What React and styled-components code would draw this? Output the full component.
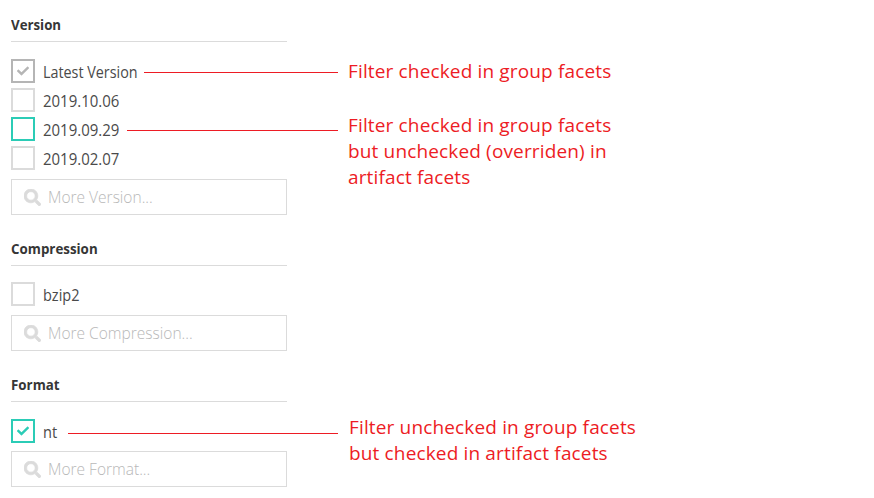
import React from "react";
import styled, { createGlobalStyle } from "styled-components";
import { FaCheck, FaSearch } from "react-icons/fa";

const facets = [
    {
        name: "Version",
        titleStretch: 0.885,
        gap: 17,
        searchGap: 9,
        filters: [
            { label: "Latest Version", stretch: 0.896, checked: true, state: "group", leaderAt: 133 },
            { label: "2019.10.06", stretch: 0.935 },
            { label: "2019.09.29", stretch: 0.935, state: "override", leaderAt: 116 },
            { label: "2019.02.07", stretch: 0.935 },
        ],
    },
    {
        name: "Compression",
        titleStretch: 0.89,
        gap: 16,
        searchGap: 9,
        filters: [{ label: "bzip2", stretch: 0.905 }],
    },
    {
        name: "Format",
        titleStretch: 0.89,
        gap: 17,
        searchGap: 8,
        filters: [{ label: "nt", stretch: 0.91, checked: true, state: "override", leaderAt: 57, leaderTop: 14 }],
    },
];

const notes = [
    { lines: ["Filter checked in group facets"], gap: 58 },
    { lines: ["Filter checked in group facets", "but unchecked (overriden) in", "artifact facets"], gap: 28 },
    { lines: ["Filter unchecked in group facets", "but checked in artifact facets"], gap: 224, indent: 1 },
];

const boxColors = {
    group: "#b5b5b5",
    override: "#2bccb6",
};

const GlobalStyle = createGlobalStyle`
    * {
        box-sizing: border-box;
    }
    body {
        margin: 0;
        background: #fff;
        font-family: "Open Sans", "Noto Sans", sans-serif;
    }
`;

const Page = styled.div`
    display: flex;
    width: 874px;
    height: 498px;
    padding-left: 11px;
    overflow: hidden;
`;

const FacetList = styled.div`
    width: 327px;
    padding-top: 8px;
`;

const Facet = styled.section`
    margin-bottom: 17px;
`;

const FacetTitle = styled.h2`
    width: 276px;
    height: 34px;
    margin: 0;
    border-bottom: 1px solid #dbdbdb;
    color: #363636;
    font-size: 15px;
    font-weight: 700;
    line-height: 33px;
`;

const Stretch = styled.span`
    display: inline-block;
    white-space: nowrap;
    transform: scaleX(${({ $x }) => $x});
    transform-origin: left center;
`;

const Filters = styled.div`
    display: flex;
    flex-direction: column;
    gap: 5px;
    margin-top: ${({ $gap }) => $gap}px;
`;

const FilterRow = styled.div`
    display: flex;
    height: 24px;
`;

const CheckBox = styled.span`
    display: flex;
    flex: none;
    align-items: center;
    justify-content: center;
    width: 24px;
    height: 24px;
    border: 2px solid ${({ $state }) => boxColors[$state] || "#dbdbdb"};
    color: ${({ $state }) => boxColors[$state]};
    font-size: 12px;
`;

const Label = styled.span`
    flex: none;
    width: ${({ $width }) => $width}px;
    padding-left: 8px;
    color: #4a4a4a;
    font-size: 16px;
    line-height: 26px;
`;

const Leader = styled.span`
    flex: 1;
    height: 1px;
    margin-top: ${({ $top }) => $top || 13}px;
    background: #ed1c24;
`;

const SearchBox = styled.div`
    display: flex;
    align-items: center;
    gap: 7px;
    width: 276px;
    height: 36px;
    margin-top: ${({ $gap }) => $gap}px;
    padding-left: 12px;
    border: 1px solid #dbdbdb;
    color: #dbdbdb;
    font-size: 17px;
    svg {
        stroke: currentColor;
        stroke-width: 22px;
    }
`;

const Placeholder = styled(Stretch)`
    color: #b8b8b8;
    font-size: 16px;
    font-weight: 300;
`;

const Notes = styled.div`
    width: 400px;
    padding-left: 10px;
`;

const Note = styled.p`
    margin: 0;
    padding-top: ${({ $gap }) => $gap}px;
    padding-left: ${({ $indent }) => $indent || 0}px;
    color: #ed1c24;
    font-size: 19px;
    letter-spacing: 0.15px;
    line-height: 26px;
    white-space: nowrap;
    span {
        display: block;
    }
`;

function Filter({ filter }) {
    return (
        <FilterRow>
            <CheckBox $state={filter.state}>{filter.checked && <FaCheck />}</CheckBox>
            <Label $width={filter.leaderAt ? filter.leaderAt - 24 : 200}>
                <Stretch $x={filter.stretch}>{filter.label}</Stretch>
            </Label>
            {filter.leaderAt && <Leader $top={filter.leaderTop} />}
        </FilterRow>
    );
}

export default function App() {
    return (
        <>
            <GlobalStyle />
            <Page>
                <FacetList>
                    {facets.map((facet) => (
                        <Facet key={facet.name}>
                            <FacetTitle>
                                <Stretch $x={facet.titleStretch}>{facet.name}</Stretch>
                            </FacetTitle>
                            <Filters $gap={facet.gap}>
                                {facet.filters.map((filter) => (
                                    <Filter key={filter.label} filter={filter} />
                                ))}
                            </Filters>
                            <SearchBox $gap={facet.searchGap}>
                                <FaSearch />
                                <Placeholder $x={0.97}>More {facet.name}...</Placeholder>
                            </SearchBox>
                        </Facet>
                    ))}
                </FacetList>
                <Notes>
                    {notes.map((note, i) => (
                        <Note key={i} $gap={note.gap} $indent={note.indent}>
                            {note.lines.map((line) => (
                                <span key={line}>{line}</span>
                            ))}
                        </Note>
                    ))}
                </Notes>
            </Page>
        </>
    );
}
